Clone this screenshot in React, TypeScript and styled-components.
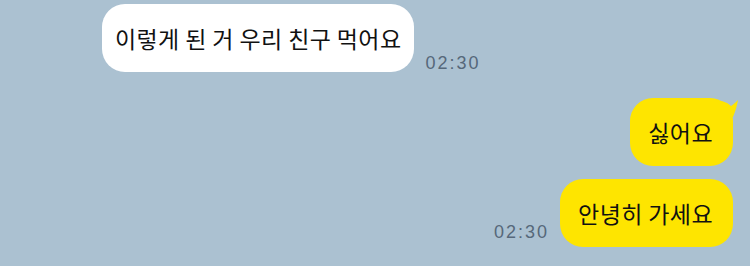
import styled, { createGlobalStyle } from 'styled-components';

const GlobalStyle = createGlobalStyle`
  html, body {
    margin: 0;
    padding: 0;
    background: #abc1d1;
  }
`;

const Room = styled.main`
  width: 750px;
  height: 266px;
  box-sizing: border-box;
  padding: 4px 17px 0 102px;
  background: #abc1d1;
  display: flex;
  flex-direction: column;
  font-family: "Noto Sans CJK KR", "Noto Sans", sans-serif;
  overflow: hidden;
`;

const Row = styled.div<{ $mine?: boolean; $gap: number }>`
  display: flex;
  align-items: flex-end;
  justify-content: ${p => (p.$mine ? 'flex-end' : 'flex-start')};
  margin-top: ${p => p.$gap}px;
  gap: 11px;
`;

const Bubble = styled.div<{ $mine?: boolean }>`
  position: relative;
  box-sizing: border-box;
  height: 68px;
  display: flex;
  align-items: center;
  padding: 0 ${p => (p.$mine ? '20px 0 18px' : '13px 0 13px')};
  border-radius: 23px;
  background: ${p => (p.$mine ? '#fee500' : '#ffffff')};
  color: #111;
  font-size: 23px;
  letter-spacing: 0.4px;
  white-space: nowrap;
`;

const Tail = styled.svg`
  position: absolute;
  top: 1px;
  right: -5px;
  width: 20px;
  height: 18px;
`;

const Time = styled.span<{ $drop: number }>`
  font-family: "Liberation Sans", Arial, sans-serif;
  font-size: 18px;
  letter-spacing: 2px;
  color: #56687a;
  line-height: 1;
  margin-bottom: ${p => p.$drop}px;
`;

export default function App() {
  return (
    <>
      <GlobalStyle />
      <Room>
        <Row $gap={0}>
          <Bubble>이렇게 된 거 우리 친구 먹어요</Bubble>
          <Time $drop={0}>02:30</Time>
        </Row>
        <Row $mine $gap={26}>
          <Bubble $mine>
            싫어요
            <Tail viewBox="0 0 20 18">
              <path d="M0 2 C6 2 10 4 13 7 C16 5 18 3 20 1 C19 6 18 11 15 18 L0 18 Z" fill="#fee500" />
            </Tail>
          </Bubble>
        </Row>
        <Row $mine $gap={13}>
          <Time $drop={6}>02:30</Time>
          <Bubble $mine>안녕히 가세요</Bubble>
        </Row>
      </Room>
    </>
  );
}
